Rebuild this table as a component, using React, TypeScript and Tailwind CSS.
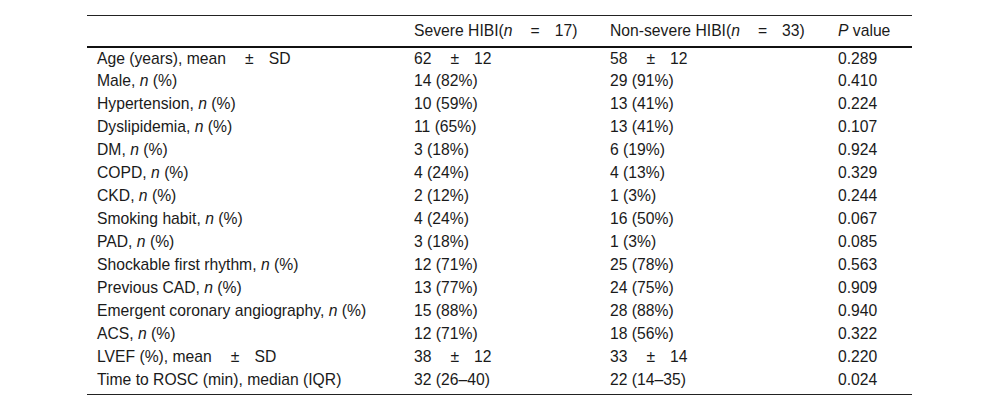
type Row = [React.ReactNode, React.ReactNode, React.ReactNode, string];

function PM({ a, b }: { a: string; b: string }) {
  return (
    <>
      {a}
      <span className="ml-[19px] mr-[15px]">±</span>
      {b}
    </>
  );
}

function N({ label }: { label: string }) {
  return (
    <>
      {label}, <i>n</i> (%)
    </>
  );
}

const data: Row[] = [
  [<PM a="Age (years), mean" b="SD" />, <PM a="62" b="12" />, <PM a="58" b="12" />, '0.289'],
  [<N label="Male" />, '14 (82%)', '29 (91%)', '0.410'],
  [<N label="Hypertension" />, '10 (59%)', '13 (41%)', '0.224'],
  [<N label="Dyslipidemia" />, '11 (65%)', '13 (41%)', '0.107'],
  [<N label="DM" />, '3 (18%)', '6 (19%)', '0.924'],
  [<N label="COPD" />, '4 (24%)', '4 (13%)', '0.329'],
  [<N label="CKD" />, '2 (12%)', '1 (3%)', '0.244'],
  [<N label="Smoking habit" />, '4 (24%)', '16 (50%)', '0.067'],
  [<N label="PAD" />, '3 (18%)', '1 (3%)', '0.085'],
  [<N label="Shockable first rhythm" />, '12 (71%)', '25 (78%)', '0.563'],
  [<N label="Previous CAD" />, '13 (77%)', '24 (75%)', '0.909'],
  [<N label="Emergent coronary angiography" />, '15 (88%)', '28 (88%)', '0.940'],
  [<N label="ACS" />, '12 (71%)', '18 (56%)', '0.322'],
  [<PM a="LVEF (%), mean" b="SD" />, <PM a="38" b="12" />, <PM a="33" b="14" />, '0.220'],
  ['Time to ROSC (min), median (IQR)', '32 (26–40)', '22 (14–35)', '0.024'],
];

export default function App() {
  return (
    <div
      className="w-[1000px] h-[415px] bg-white pt-[15px] pl-[87px] text-[#1a1a1a] text-[15.7px] leading-none"
      style={{ fontFamily: '"Liberation Sans", Arial, sans-serif' }}
    >
      <table className="w-[825px] border-collapse border-t border-b border-[#222]">
        <colgroup>
          <col className="w-[327px]" />
          <col className="w-[196px]" />
          <col className="w-[228px]" />
          <col className="w-[74px]" />
        </colgroup>
        <thead>
          <tr className="h-[31px] border-b-2 border-[#111]">
            <th className="pl-[10px]" />
            <th className="text-left font-normal">
              Severe HIBI(<i>n</i>
              <span className="ml-[18px] mr-[15px]">=</span>17)
            </th>
            <th className="text-left font-normal">
              Non-severe HIBI(<i>n</i>
              <span className="ml-[18px] mr-[15px]">=</span>33)
            </th>
            <th className="text-left font-normal">
              <i>P</i> value
            </th>
          </tr>
        </thead>
        <tbody>
          {data.map((r, i) => (
            <tr key={i} className="h-[23px]">
              <td className="pl-[10px]">{r[0]}</td>
              <td>{r[1]}</td>
              <td>{r[2]}</td>
              <td>{r[3]}</td>
            </tr>
          ))}
          <tr className="h-[3px]">
            <td colSpan={4} />
          </tr>
        </tbody>
      </table>
    </div>
  );
}
